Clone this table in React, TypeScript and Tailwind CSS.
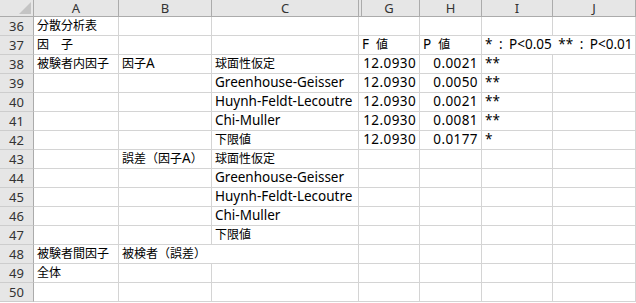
import React from "react";

type Cell = { text?: string; align?: "left" | "right"; span?: number; wide?: boolean };

const cols = ["A", "B", "C", "G", "H", "I", "J"];

// each row lists cells left to right; span merges the overflow into the next column
const rows: { n: number; cells: Cell[] }[] = [
  { n: 36, cells: [{ text: "分散分析表" }, {}, {}, {}, {}, {}, {}] },
  {
    n: 37,
    cells: [
      { text: "因\u3000子" },
      {},
      {},
      { text: "F\u00a0\u00a0値" },
      { text: "P\u00a0\u00a0値" },
      { text: "* : P<0.05 ** : P<0.01", span: 2, wide: true },
    ],
  },
  {
    n: 38,
    cells: [
      { text: "被験者内因子" },
      { text: "因子A" },
      { text: "球面性仮定" },
      { text: "12.0930", align: "right" },
      { text: "0.0021", align: "right" },
      { text: "**" },
      {},
    ],
  },
  {
    n: 39,
    cells: [
      {},
      {},
      { text: "Greenhouse-Geisser" },
      { text: "12.0930", align: "right" },
      { text: "0.0050", align: "right" },
      { text: "**" },
      {},
    ],
  },
  {
    n: 40,
    cells: [
      {},
      {},
      { text: "Huynh-Feldt-Lecoutre" },
      { text: "12.0930", align: "right" },
      { text: "0.0021", align: "right" },
      { text: "**" },
      {},
    ],
  },
  {
    n: 41,
    cells: [
      {},
      {},
      { text: "Chi-Muller" },
      { text: "12.0930", align: "right" },
      { text: "0.0081", align: "right" },
      { text: "**" },
      {},
    ],
  },
  {
    n: 42,
    cells: [
      {},
      {},
      { text: "下限値" },
      { text: "12.0930", align: "right" },
      { text: "0.0177", align: "right" },
      { text: "*" },
      {},
    ],
  },
  { n: 43, cells: [{}, { text: "誤差（因子A）" }, { text: "球面性仮定" }, {}, {}, {}, {}] },
  { n: 44, cells: [{}, {}, { text: "Greenhouse-Geisser" }, {}, {}, {}, {}] },
  { n: 45, cells: [{}, {}, { text: "Huynh-Feldt-Lecoutre" }, {}, {}, {}, {}] },
  { n: 46, cells: [{}, {}, { text: "Chi-Muller" }, {}, {}, {}, {}] },
  { n: 47, cells: [{}, {}, { text: "下限値" }, {}, {}, {}, {}] },
  { n: 48, cells: [{ text: "被験者間因子" }, { text: "被検者（誤差）", span: 2 }, {}, {}, {}, {}] },
  { n: 49, cells: [{ text: "全体" }, {}, {}, {}, {}, {}, {}] },
  { n: 50, cells: [{}, {}, {}, {}, {}, {}, {}] },
];

// kanji/kana run a size smaller than the latin text
function Mixed({ text }: { text: string }) {
  const parts = text.split(/([\u3000-\u30ff\u4e00-\u9fff\uff00-\uffef]+)/).filter(Boolean);
  return (
    <>
      {parts.map((p, i) =>
        /[\u3000-\u30ff\u4e00-\u9fff\uff00-\uffef]/.test(p) ? (
          <span key={i} className="text-[12px]">
            {p}
          </span>
        ) : (
          <span key={i}>{p}</span>
        )
      )}
    </>
  );
}

function App() {
  return (
    <div
      className="w-[636px] h-[303px] overflow-hidden bg-white text-[13.5px] text-black"
      style={{ fontFamily: '"Noto Sans", "Noto Sans CJK JP", sans-serif' }}
    >
      <div className="grid grid-cols-[34px_85px_93px_147px_61px_62px_71px_1fr] grid-rows-[17px] auto-rows-[19px]">
        {/* corner */}
        <div className="flex items-end justify-end bg-[#e6e6e6] border-r border-b border-[#ababab] pr-[2px] pb-[2px]">
          <svg width="12" height="12" viewBox="0 0 12 12">
            <polygon points="12,0 12,12 0,12" fill="#c4c4c4" />
          </svg>
        </div>
        {cols.map((c) => (
          <div
            key={c}
            className={
              "flex items-center justify-center bg-[#e6e6e6] border-r border-b border-[#ababab] text-[13px] text-[#333] leading-none " +
              (c === "G" ? "shadow-[inset_2px_0_0_#e6e6e6,inset_3px_0_0_#ababab]" : "")
            }
          >
            {c}
          </div>
        ))}

        {rows.map((r) => (
          <React.Fragment key={r.n}>
            <div className="flex items-center justify-center bg-[#e6e6e6] border-r border-r-[#ababab] border-b border-b-[#cdcdcd] text-[13px] text-[#333] leading-none">
              {r.n}
            </div>
            {r.cells.map((cell, i) => (
              <div
                key={i}
                className={
                  "flex items-center whitespace-pre overflow-visible border-r border-b border-[#d4d4d4] px-[3px] leading-none " +
                  (cell.align === "right" ? "justify-end tracking-[0.4px] " : "justify-start ") +
                  (cell.span === 2 ? "col-span-2 " : "") +
                  (cell.wide ? "[word-spacing:3px]" : "")
                }
              >
                {cell.text && <Mixed text={cell.text} />}
              </div>
            ))}
          </React.Fragment>
        ))}
      </div>
    </div>
  );
}

export default App;
